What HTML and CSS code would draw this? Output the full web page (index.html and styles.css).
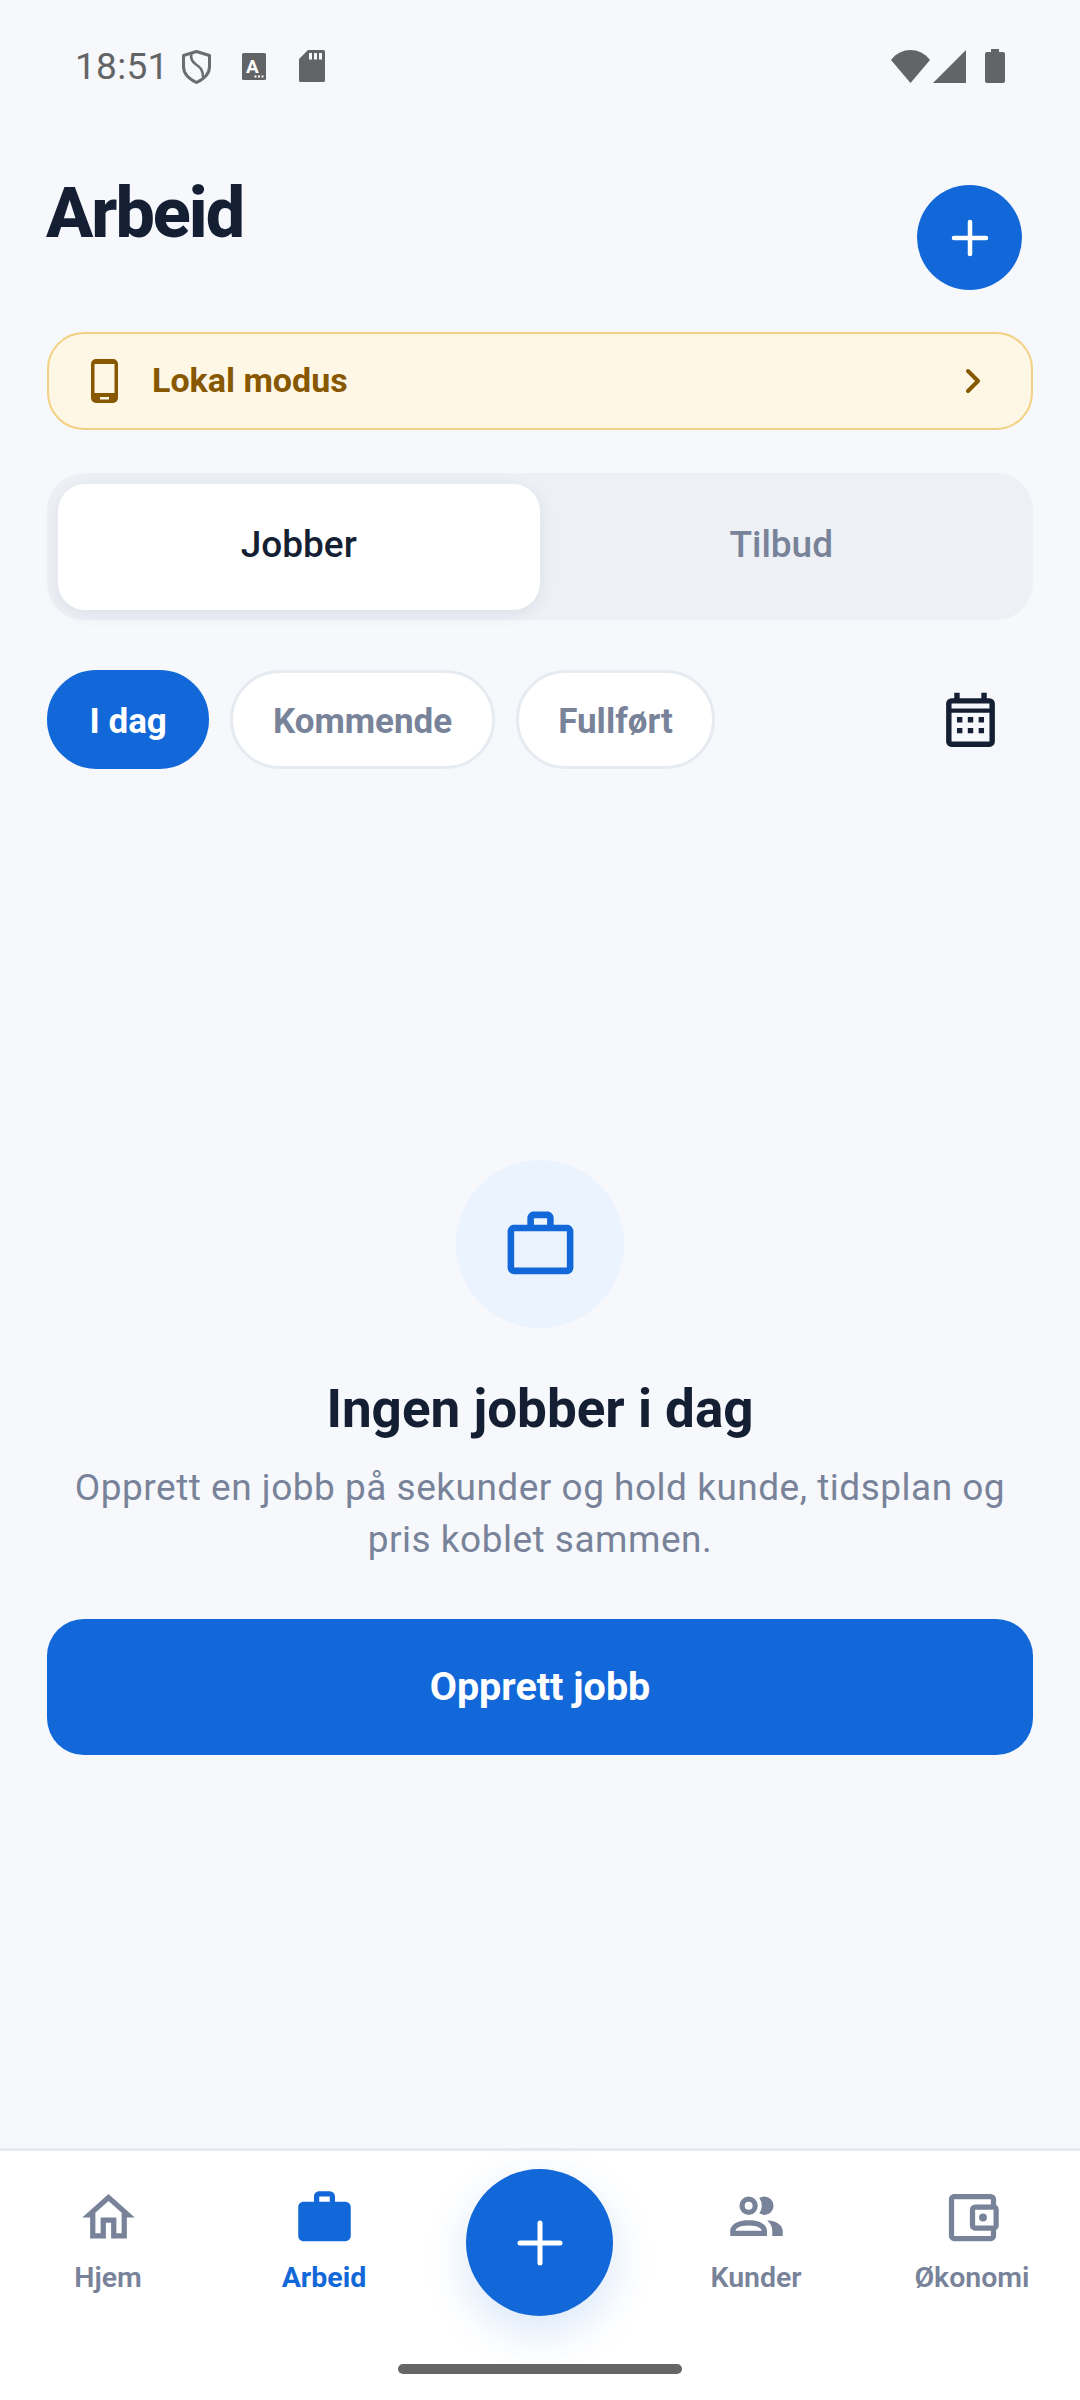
FILE: index.html
```html
<!DOCTYPE html>
<html lang="no">
<head>
<meta charset="utf-8">
<title>Arbeid</title>
<link rel="stylesheet" href="styles.css">
</head>
<body>
<div class="screen">
  <div class="status">
    <span class="time">18:51</span>
    <svg class="st-shield" viewBox="0 0 29 34"><path d="M14.500 1.500 27.500 5.500V16.500C27.500 23.500 22 29 14.500 32.500 7 29 1.500 23.500 1.500 16.500V5.500Z" fill="none" stroke="#6b6c6e" stroke-width="3" stroke-linejoin="round"/><path d="M9.500 3.500C8 9 10.500 12 14 14.500 18.500 17.500 21 20 21 27" fill="none" stroke="#6b6c6e" stroke-width="2.500"/></svg>
    <svg class="st-a" viewBox="0 0 24 27"><rect width="24" height="27" rx="1.500" fill="#636466"/><text x="10.500" y="19.500" class="st-a-letter">A</text><rect x="12.500" y="22.500" width="2" height="2" fill="#fff"/><rect x="16" y="22.500" width="2" height="2" fill="#fff"/><rect x="19.500" y="22.500" width="2" height="2" fill="#fff"/></svg>
    <svg class="st-sd" viewBox="0 0 26 32"><path d="M9 0H24.500A1.500 1.500 0 0 1 26 1.500V30.500A1.500 1.500 0 0 1 24.500 32H1.500A1.500 1.500 0 0 1 0 30.500V9ZM10 3V9.500H13V3ZM15 3V9.500H18V3ZM20 3V9.500H23V3Z" fill="#636466" fill-rule="evenodd"/></svg>
    <span class="st-spacer"></span>
    <svg class="st-wifi" viewBox="0 0 39 33"><path d="M0 10C10 -3.300 29 -3.300 39 10L19.500 33Z" fill="#636466"/></svg>
    <svg class="st-signal" viewBox="0 0 33 33"><path d="M33 0V33H0Z" fill="#636466"/></svg>
    <svg class="st-batt" viewBox="0 0 20 34"><path d="M6 0H14V3H18A2 2 0 0 1 20 5V32A2 2 0 0 1 18 34H2A2 2 0 0 1 0 32V5A2 2 0 0 1 2 3H6Z" fill="#636466"/></svg>
  </div>

  <main class="main">
    <header class="head">
      <h1 class="title">Arbeid</h1>
      <button class="add" aria-label="Legg til"><svg class="plus" viewBox="0 0 38 38"><path d="M19 3V35M3 19H35" stroke="#fff" stroke-width="4.500" stroke-linecap="round" fill="none"/></svg></button>
    </header>

    <div class="banner">
      <svg class="phone" viewBox="0 0 27 44"><path fill-rule="evenodd" d="M5 0H22A5 5 0 0 1 27 5V39A5 5 0 0 1 22 44H5A5 5 0 0 1 0 39V5A5 5 0 0 1 5 0ZM3.500 5V34H23.500V5ZM9 38V40.500H18V38Z" fill="#875800"/></svg>
      <span class="banner-text">Lokal modus</span>
      <svg class="chev" viewBox="0 0 16 26"><path d="M3 3 13 13 3 23" fill="none" stroke="#875800" stroke-width="4" stroke-linecap="round" stroke-linejoin="round"/></svg>
    </div>

    <div class="seg">
      <div class="seg-item seg-on">Jobber</div>
      <div class="seg-item">Tilbud</div>
    </div>

    <div class="chips">
      <span class="chip chip-on">I dag</span>
      <span class="chip">Kommende</span>
      <span class="chip">Fullført</span>
      <svg class="cal" viewBox="0 0 24 24"><path fill-rule="evenodd" fill="#151f33" d="M19 3A2 2 0 0 1 21 5V19A2 2 0 0 1 19 21H5C3.890 21 3 20.100 3 19V5A2 2 0 0 1 5 3H6V1H8V3H16V1H18V3ZM5 5V6.800H19V5ZM5 8.400V19H19V8.400ZM7 10H9V12H7ZM11 10H13V12H11ZM15 10H17V12H15ZM7 14H9V16H7ZM11 14H13V16H11ZM15 14H17V16H15Z"/></svg>
    </div>

    <section class="empty">
      <div class="empty-icon"><svg viewBox="0 0 24 24"><path fill="#1268d8" d="M20 6C20.580 6 21.050 6.200 21.420 6.590 21.800 7 22 7.450 22 8V19C22 19.550 21.800 20 21.420 20.410 21.050 20.800 20.580 21 20 21H4C3.420 21 2.950 20.800 2.580 20.410 2.200 20 2 19.550 2 19V8C2 7.450 2.200 7 2.580 6.590 2.950 6.200 3.420 6 4 6H8V4C8 3.420 8.200 2.950 8.580 2.580 8.950 2.200 9.420 2 10 2H14C14.580 2 15.050 2.200 15.420 2.580 15.800 2.950 16 3.420 16 4V6ZM4 8V19H20V8ZM14 6V4H10V6Z"/></svg></div>
      <h2 class="empty-title">Ingen jobber i dag</h2>
      <p class="empty-desc">Opprett en jobb på sekunder og hold kunde, tidsplan og pris koblet sammen.</p>
      <button class="cta">Opprett jobb</button>
    </section>
  </main>

  <nav class="nav">
    <div class="nav-item"><svg viewBox="0 0 24 24"><path fill="#78839a" d="M12 5.690 17 10.190V18H15V12H9V18H7V10.190ZM12 3 2 12H5V20H11V14H13V20H19V12H22Z"/></svg><span>Hjem</span></div>
    <div class="nav-item nav-on"><svg viewBox="0 0 24 24"><path fill="#1268d8" fill-rule="evenodd" d="M10 2H14A2 2 0 0 1 16 4V6H20A2 2 0 0 1 22 8V19A2 2 0 0 1 20 21H4C2.890 21 2 20.100 2 19V8C2 6.890 2.890 6 4 6H8V4C8 2.890 8.890 2 10 2ZM14 6V4H10V6Z"/></svg><span>Arbeid</span></div>
    <div class="nav-gap"></div>
    <div class="nav-item"><svg viewBox="0 0 24 24"><path fill="#78839a" d="M13.070 10.410A5 5 0 0 0 13.070 4.590 3.390 3.390 0 0 1 15 4 3.500 3.500 0 0 1 15 11 3.390 3.390 0 0 1 13.070 10.410M5.500 7.500A3.500 3.500 0 1 1 9 11 3.500 3.500 0 0 1 5.500 7.500M7.500 7.500A1.500 1.500 0 1 0 9 6 1.500 1.500 0 0 0 7.500 7.500M16 17V19H2V17S2 13 9 13 16 17 16 17M14 17C13.860 16.220 12.670 15 9 15S4.070 16.220 4 17M15.950 13A5.320 5.320 0 0 1 18 17V19H22V17S22 13.370 15.940 13Z"/></svg><span>Kunder</span></div>
    <div class="nav-item"><svg viewBox="0 0 24 24"><path fill="#78839a" d="M5 3C3.890 3 3 3.900 3 5V19A2 2 0 0 0 5 21H19A2 2 0 0 0 21 19V16.720C21.590 16.370 22 15.740 22 15V9C22 8.260 21.590 7.630 21 7.280V5A2 2 0 0 0 19 3H5M5 5H19V7H13A2 2 0 0 0 11 9V15A2 2 0 0 0 13 17H19V19H5V5M13 9H20V15H13V9M16 10.500A1.500 1.500 0 0 0 14.500 12 1.500 1.500 0 0 0 16 13.500 1.500 1.500 0 0 0 17.500 12 1.500 1.500 0 0 0 16 10.500Z"/></svg><span>Økonomi</span></div>
    <button class="fab" aria-label="Ny"><svg class="fab-plus" viewBox="0 0 46 46"><path d="M23 3V43M3 23H43" stroke="#fff" stroke-width="5" stroke-linecap="round" fill="none"/></svg></button>
    <div class="homebar"></div>
  </nav>
</div>
</body>
</html>
```
FILE: styles.css
```css
* { box-sizing: border-box; }
html, body { margin: 0; padding: 0; }
body { width: 1080px; height: 2400px; background: #f6f8fc; font-family: Roboto, "Liberation Sans", sans-serif; overflow: hidden; }
button { border: 0; padding: 0; font-family: inherit; }
svg { display: block; flex: none; }

.screen { height: 2400px; display: flex; flex-direction: column; }

.status { height: 132px; flex: none; display: flex; align-items: center; padding: 0 75px 0 75px; }
.time { font-size: 37px; color: #636466; letter-spacing: 0.3px; }
.st-shield { width: 29px; height: 34px; margin-left: 13px; margin-top: 1px; }
.st-a { width: 24px; height: 27px; margin-left: 31px; }
.st-a-letter { font: 700 19px Roboto, sans-serif; fill: #fff; text-anchor: middle; }
.st-sd { width: 26px; height: 32px; margin-left: 33px; }
.st-spacer { flex: 1; }
.st-wifi { width: 39px; height: 33px; }
.st-signal { width: 33px; height: 33px; margin-left: 3px; }
.st-batt { width: 20px; height: 34px; margin-left: 19px; }

.main { flex: 1; padding: 0 47px; display: flex; flex-direction: column; }

.head { display: flex; justify-content: space-between; align-items: flex-start; padding: 53px 11px 0 0; height: 157px; flex: none; }
.title { margin: -12px 0 0 -1px; font-size: 70px; line-height: 80px; font-weight: 800; color: #151f33; letter-spacing: -2px; }
.add { width: 105px; height: 105px; border-radius: 50%; background: #1268d8; display: flex; align-items: center; justify-content: center; }
.plus { width: 38px; height: 38px; }

.banner { margin-top: 43px; height: 98px; flex: none; background: #fff7e6; border: 2.500px solid #f2d084; border-radius: 37px; display: flex; align-items: center; padding: 0 50px 0 42px; }
.phone { width: 27px; height: 44px; }
.banner-text { margin-left: 34px; margin-bottom: 2px; flex: 1; font-size: 34px; font-weight: 700; color: #875800; }
.chev { width: 16px; height: 26px; }

.seg { margin-top: 43px; height: 147px; flex: none; background: #edf0f5; border-radius: 37px; padding: 10.500px; display: grid; grid-template-columns: 1fr 1fr; }
.seg-item { display: flex; align-items: center; justify-content: center; padding-bottom: 5px; font-size: 37px; font-weight: 500; color: #78839a; border-radius: 27px; }
.seg-on { background: #fff; color: #151f33; box-shadow: 0 4px 18px rgba(21, 31, 51, 0.07); }

.chips { margin-top: 50px; height: 99px; flex: none; display: flex; align-items: center; gap: 21px; }
.chip { height: 99px; border-radius: 50px; padding: 3px 39.500px 0; display: flex; align-items: center; font-size: 35px; font-weight: 700; color: #78839a; background: #fff; border: 3px solid #e6ebf2; }
.chip-on { background: #1268d8; border-color: #1268d8; color: #fff; }
.cal { width: 65px; height: 65px; margin: 6px 30px 0 auto; }

.empty { margin-top: 391px; display: flex; flex-direction: column; align-items: center; }
.empty-icon { width: 168px; height: 168px; border-radius: 50%; background: #ebf3ff; display: flex; align-items: center; justify-content: center; }
.empty-icon svg { width: 79px; height: 79px; }
.empty-title { margin: 49px 0 0; font-size: 53px; line-height: 64px; font-weight: 700; color: #151f33; }
.empty-desc { margin: 21px 0 0; font-size: 37px; line-height: 52px; letter-spacing: 0.500px; color: #78839a; text-align: center; width: 960px; }
.cta { margin-top: 53px; width: 100%; height: 136px; border-radius: 37px; padding-bottom: 2px; background: #1268d8; color: #fff; font-size: 39.500px; font-weight: 700; }

.nav { height: 252px; flex: none; position: relative; background: #fff; border-top: 3px solid #e6ebf2; display: grid; grid-template-columns: repeat(5, 1fr); }
.nav-item { display: flex; flex-direction: column; align-items: center; padding-top: 35px; font-size: 28.500px; line-height: 32px; font-weight: 600; color: #78839a; }
.nav-item svg { width: 63px; height: 63px; }
.nav-item span { margin-top: 13px; }
.nav-on { color: #1268d8; font-weight: 700; }
.fab { position: absolute; left: 466px; top: 18px; width: 147px; height: 147px; border-radius: 50%; background: #1268d8; display: flex; align-items: center; justify-content: center; box-shadow: 0 16px 44px rgba(18, 104, 216, 0.16); }
.fab-plus { width: 46px; height: 46px; }
.homebar { position: absolute; left: 398px; top: 213px; width: 284px; height: 10px; border-radius: 5px; background: #666; }
```
